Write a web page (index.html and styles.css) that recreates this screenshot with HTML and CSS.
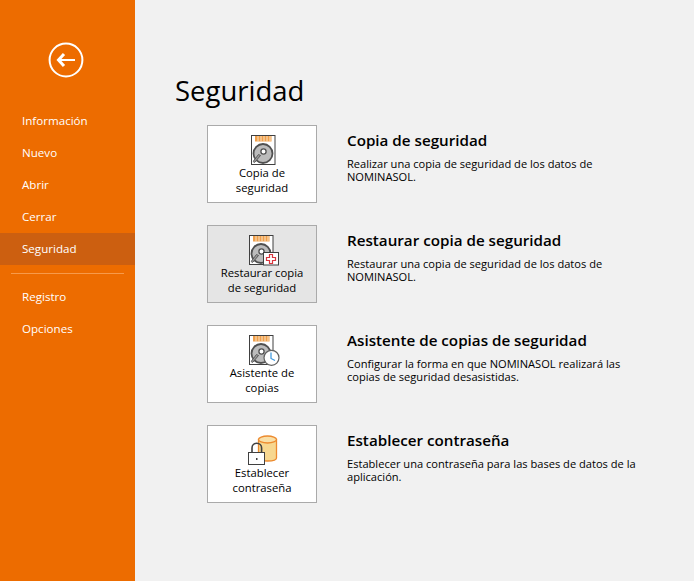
FILE: index.html
```html
<!DOCTYPE html>
<html lang="es">
<head>
    <meta charset="UTF-8">
    <title>Seguridad</title>
    <link rel="stylesheet" href="styles.css">
</head>
<body>

    <!-- Sidebar -->
    <div class="sidebar">
        <div class="back">
            <svg width="36" height="36" viewBox="0 0 36 36">
                <circle cx="18" cy="18" r="16.4" fill="none" stroke="#fff" stroke-width="2"/>
                <path d="M11 18H27" stroke="#fff" stroke-width="2" fill="none"/>
                <path d="M16 12L10.5 18L16 24" stroke="#fff" stroke-width="3" fill="none"/>
            </svg>
        </div>
        <div class="nav-item">Información</div>
        <div class="nav-item">Nuevo</div>
        <div class="nav-item">Abrir</div>
        <div class="nav-item">Cerrar</div>
        <div class="nav-item active">Seguridad</div>
        <div class="nav-sep"></div>
        <div class="nav-item">Registro</div>
        <div class="nav-item">Opciones</div>
    </div>

    <!-- Main -->
    <div class="main">
        <h1 class="title">Seguridad</h1>

        <div class="row">
            <div class="tile">
                <svg class="tile-icon" width="44" height="32" viewBox="0 0 44 32">
                    <defs>
                        <g id="disk">
                            <rect x="0.5" y="0.5" width="23.500" height="29" fill="#fff" stroke="#404040"/>
                            <rect x="4" y="1" width="16.500" height="5.500" fill="#f0a04b"/>
                            <path d="M7 1V6.500M10 1V6.500M13 1V6.500M16 1V6.500M19 1V6.500" stroke="#fbe3c6" stroke-width="1"/>
                            <circle cx="12" cy="18.500" r="9.500" fill="#bcbcbc" stroke="#505050" stroke-width="1.800"/>
                            <circle cx="12.500" cy="16.500" r="2.600" fill="#fff" stroke="#505050" stroke-width="1.300"/>
                            <path d="M9.500 20.500L4 27C3.200 28 2 27 2.600 25.800L7.500 19.500Z" fill="#9a9a9a" stroke="#505050" stroke-width="0.900"/>
                        </g>
                    </defs>
                    <use href="#disk" x="11"/>
                </svg>
                <div class="tile-label">Copia de<br>seguridad</div>
            </div>
            <div class="desc">
                <h2>Copia de seguridad</h2>
                <p>Realizar una copia de seguridad de los datos de NOMINASOL.</p>
            </div>
        </div>

        <div class="row">
            <div class="tile hover">
                <svg class="tile-icon" width="44" height="32" viewBox="0 0 44 32">
                    <use href="#disk" x="9"/>
                    <rect x="23.500" y="17.500" width="15" height="12.500" fill="#fff" stroke="#404040"/>
                    <path d="M29.500 19.500H32.500V22.500H35.500V25.500H32.500V28.500H29.500V25.500H26.500V22.500H29.500Z" fill="#fff" stroke="#d9363e" stroke-width="1.200"/>
                </svg>
                <div class="tile-label">Restaurar copia<br>de seguridad</div>
            </div>
            <div class="desc">
                <h2>Restaurar copia de seguridad</h2>
                <p>Restaurar una copia de seguridad de los datos de NOMINASOL.</p>
            </div>
        </div>

        <div class="row">
            <div class="tile">
                <svg class="tile-icon" width="44" height="32" viewBox="0 0 44 32">
                    <use href="#disk" x="9"/>
                    <circle cx="31.500" cy="22.800" r="7.500" fill="#fff" stroke="#606060" stroke-width="1.200"/>
                    <path d="M31 17.500V23.500L35 25.500" fill="none" stroke="#3a96dd" stroke-width="1.200"/>
                </svg>
                <div class="tile-label">Asistente de<br>copias</div>
            </div>
            <div class="desc">
                <h2>Asistente de copias de seguridad</h2>
                <p>Configurar la forma en que NOMINASOL realizará las copias de seguridad desasistidas.</p>
            </div>
        </div>

        <div class="row">
            <div class="tile">
                <svg class="tile-icon" width="44" height="32" viewBox="0 0 44 32">
                    <path d="M18.500 4.500V23C18.500 25 22 26 27.500 26C33 26 36.500 25 36.500 23V4.500Z" fill="#f7d78f" stroke="#ec8a2e" stroke-width="1.300"/>
                    <ellipse cx="27.500" cy="4.500" rx="9" ry="3.500" fill="#f9e0a8" stroke="#ec8a2e" stroke-width="1.300"/>
                    <path d="M12 18V13A4.800 4.800 0 0 1 21.600 13V18" fill="none" stroke="#404040" stroke-width="1.600"/>
                    <rect x="8.500" y="17.500" width="16" height="12" fill="#fff" stroke="#404040"/>
                    <rect x="16" y="23" width="1.500" height="2" fill="#404040"/>
                </svg>
                <div class="tile-label">Establecer<br>contraseña</div>
            </div>
            <div class="desc">
                <h2>Establecer contraseña</h2>
                <p>Establecer una contraseña para las bases de datos de la aplicación.</p>
            </div>
        </div>
    </div>

</body>
</html>
```

FILE: styles.css
```css
html, body {
    height: 100%;
}

body {
    font-family: "Open Sans", "Noto Sans", sans-serif;
    background-color: #f1f1f1;
    margin: 0;
    padding: 0;
    color: #000;
    display: flex;
    overflow: hidden;
}

.sidebar {
    width: 135px;
    flex: none;
    background-color: #ed6c00;
    color: white;
    padding-top: 42px;
    box-sizing: border-box;
}

.back {
    height: 63px;
    padding-left: 48px;
}

.nav-item {
    height: 32px;
    line-height: 32px;
    padding-left: 22px;
    font-size: 11.6px;
}

.nav-item.active {
    background-color: #cc5f10;
}

.nav-sep {
    height: 1px;
    margin: 8px 11px 7px;
    background-color: #f79a4a;
}

.main {
    flex: 1;
    padding: 0 0 0 40px;
}

.title {
    font-size: 27.5px;
    font-weight: 400;
    line-height: 38px;
    margin: 72px 0 15px;
}

.row {
    display: flex;
    height: 78px;
    margin: 0 0 22px 32px;
}

.tile {
    width: 110px;
    height: 78px;
    box-sizing: border-box;
    flex: none;
    background-color: #fff;
    border: 1px solid #aaa;
    text-align: center;
    padding-top: 9px;
}

.tile.hover {
    background-color: #e5e5e5;
}

.tile-icon {
    display: block;
    margin: 0 auto;
}

.tile-label {
    font-size: 11.3px;
    line-height: 15px;
    margin-top: -2px;
}

.desc {
    margin-left: 30px;
    width: 290px;
}

.desc h2 {
    font-size: 15.2px;
    font-weight: 600;
    line-height: 20px;
    margin: 5px 0 7px;
}

.desc p {
    font-size: 11.1px;
    line-height: 13px;
    margin: 0;
}
```
